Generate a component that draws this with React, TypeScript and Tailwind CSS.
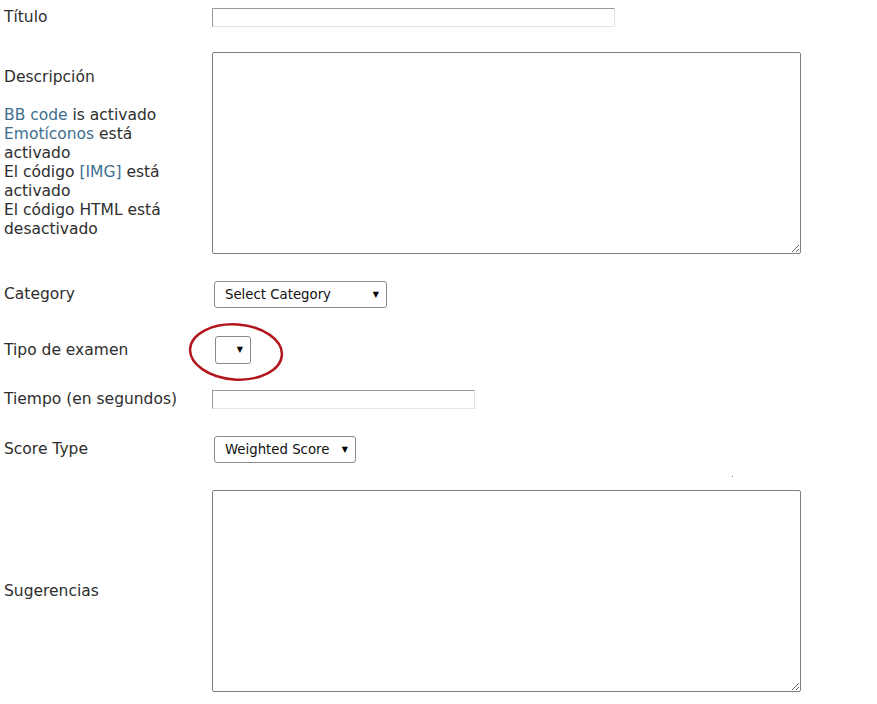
import React from 'react';

const font = { fontFamily: '"DejaVu Sans", Verdana, sans-serif' };

function FakeSelect({ label, width, height }: { label: string; width: string; height: string }) {
  return (
    <div
      className={`ml-[2px] flex items-center justify-between rounded-[3px] border border-[#8a8a8a] bg-white pl-[10px] pr-[7px] text-[13.3px] text-[#111] ${width} ${height}`}
    >
      <span>{label}</span>
      <span className="text-[8px] leading-none text-black">▼</span>
    </div>
  );
}

function TextInput({ width }: { width: string }) {
  return (
    <input
      type="text"
      className={`h-[19px] border border-t-[#9a9a9a] border-l-[#9a9a9a] border-r-[#e3e3e3] border-b-[#e3e3e3] bg-white outline-none ${width}`}
    />
  );
}

function Area() {
  return (
    <textarea className="h-[202px] w-[589px] rounded-[2px] border border-[#7f7f7f] bg-white outline-none" />
  );
}

export default function App() {
  return (
    <div className="relative min-h-[704px] w-[877px] bg-white text-[15.5px] leading-[19px] text-[#2e2e2e]" style={font}>
      {/* Título */}
      <div className="flex items-center pt-[8px]">
        <div className="w-[212px] pl-[4px]">Título</div>
        <TextInput width="w-[403px]" />
      </div>

      {/* Descripción */}
      <div className="mt-[25px] flex">
        <div className="w-[212px] pl-[4px] pr-[10px] pt-[16px]">
          <div>Descripción</div>
          <div className="h-[19px]" />
          <div>
            <span className="text-[#3f6f8e]">BB code</span> is activado
          </div>
          <div>
            <span className="text-[#3f6f8e]">Emotíconos</span> está activado
          </div>
          <div>
            El código <span className="text-[#3f6f8e]">[IMG]</span> está activado
          </div>
          <div>El código HTML está desactivado</div>
        </div>
        <Area />
      </div>

      {/* Category */}
      <div className="mt-[27px] flex items-center">
        <div className="w-[212px] pl-[4px]">Category</div>
        <FakeSelect label="Select Category" width="w-[173px]" height="h-[27px]" />
      </div>

      {/* Tipo de examen */}
      <div className="mt-[28px] flex items-center">
        <div className="w-[213px] pl-[4px]">Tipo de examen</div>
        <div className="relative">
          <FakeSelect label="" width="w-[36px]" height="h-[28px]" />
          <svg
            className="pointer-events-none absolute left-[-27px] top-[-15px]"
            width="100"
            height="62"
            viewBox="0 0 100 62"
          >
            <ellipse
              cx="50"
              cy="31"
              rx="46"
              ry="27.5"
              fill="none"
              stroke="#b3171d"
              strokeWidth="2.5"
              transform="rotate(4 50 31)"
            />
          </svg>
        </div>
      </div>

      {/* Tiempo */}
      <div className="mt-[26px] flex items-center">
        <div className="w-[212px] pl-[4px]">Tiempo (en segundos)</div>
        <TextInput width="w-[263px]" />
      </div>

      {/* Score Type */}
      <div className="mt-[27px] flex items-center">
        <div className="w-[212px] pl-[4px]">Score Type</div>
        <FakeSelect label="Weighted Score" width="w-[142px]" height="h-[27px]" />
      </div>

      {/* Sugerencias */}
      <div className="mt-[27px] flex items-center">
        <div className="w-[212px] pl-[4px]">Sugerencias</div>
        <Area />
      </div>

      <span className="absolute left-[732px] top-[476px] h-[1px] w-[1px] bg-[#777]" />
    </div>
  );
}
